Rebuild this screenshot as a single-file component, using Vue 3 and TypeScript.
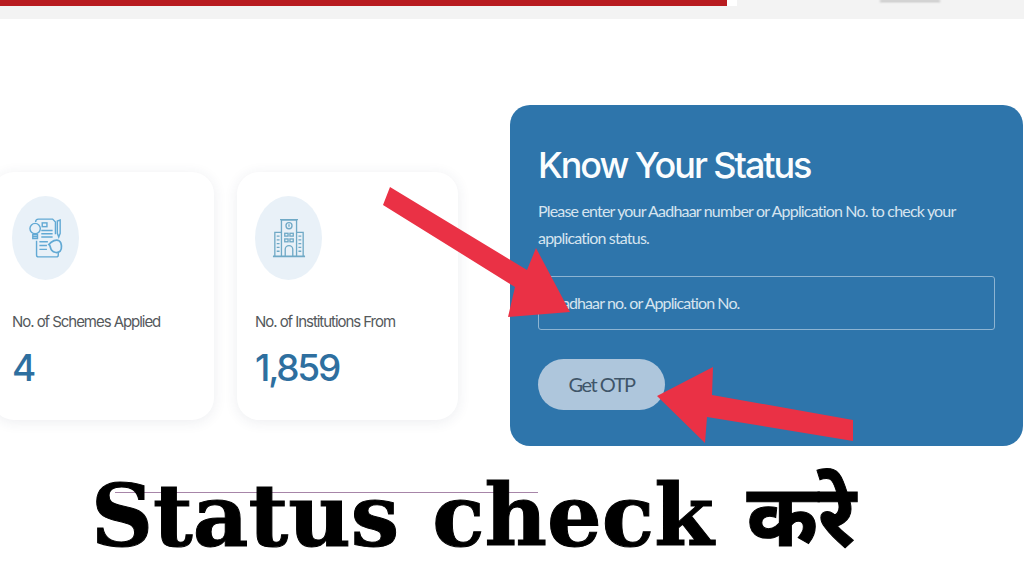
<script setup lang="ts">
interface Stat { label: string; value: string; kind: 'schemes' | 'institutions' }
const stats: Stat[] = [
  { label: 'No. of Schemes Applied', value: '4', kind: 'schemes' },
  { label: 'No. of Institutions From', value: '1,859', kind: 'institutions' },
]
</script>

<template>
  <div class="page">
    <header class="top">
      <div class="red"></div>
      <div class="gap"></div>
      <div class="smudge"></div>
    </header>

    <main class="main">
      <section v-for="s in stats" :key="s.label" class="card">
        <div class="bubble">
          <svg v-if="s.kind === 'schemes'" viewBox="0 0 36 42" class="ico" fill="none" stroke="#62a9d4" stroke-width="1.5">
            <path d="M7 4c0-2 1-3 3-3h15l3 3v13M8 24v15c0 1 1 2 2 2h19c1 0 2-1 2-2v-3" />
            <circle cx="6.500" cy="11" r="5.500" />
            <path d="M4 17.500h5v4H4zM4 19.500h5" />
            <rect x="14" y="5" width="5" height="4" />
            <path d="M13 13h12M13 16.500h12M13 20h12M11 25h9M11 29h8M11 33h8" />
            <path d="M33 2v14l-1.500 4-1.500-4V3z" />
            <path d="M21 28c3-4 8-6 11-4s3 9 1 11-7 2-9-1-1-5-3-6z" stroke-width="1.800" />
          </svg>
          <svg v-else viewBox="0 0 36 42" class="ico" fill="none" stroke="#6fa9c6" stroke-width="1.400">
            <path d="M1 40.500h34" stroke-width="1.800" />
            <path d="M10 40V2h16v38M8.500 1.500h19" />
            <circle cx="18" cy="8" r="3.200" />
            <path d="M18 6.500V9" />
            <path d="M3 40V15h7M33 40V15h-7" />
            <path d="M5 19h3M5 23h3M5 27h3M5 31h3M5 35h3M28 19h3M28 23h3M28 27h3M28 31h3M28 35h3" />
            <rect x="13.500" y="16" width="3.500" height="3" />
            <rect x="19" y="16" width="3.500" height="3" />
            <rect x="13.500" y="22" width="3.500" height="3" />
            <rect x="19" y="22" width="3.500" height="3" />
            <path d="M14 40v-7a4 4 0 0 1 8 0v7" />
          </svg>
        </div>
        <div class="label">{{ s.label }}</div>
        <div class="value">{{ s.value }}</div>
      </section>

      <section class="panel">
        <h1 class="title">Know Your Status</h1>
        <p class="lead">Please enter your Aadhaar number or Application No. to check your application status.</p>
        <div class="field">Aadhaar no. or Application No.</div>
        <button class="otp" type="button">Get OTP</button>
      </section>
    </main>

    <div class="rule"></div>
    <h2 class="caption">Status check करे</h2>

    <svg class="overlay" viewBox="0 0 1024 576">
      <polygon fill="#ea3145" points="390,187 527,270 536,248 570,312 508,317 515,287 383,205" />
      <polygon fill="#ea3145" points="657,396 713,367 712,395 853,420 853,441 707,417 705,443" />
    </svg>
  </div>
</template>

<style>
html, body { margin: 0; background: #fff; overflow: hidden; }
</style>

<style scoped>
.page {
  position: relative;
  width: 1024px;
  height: 576px;
  overflow: hidden;
  background: #fff;
  font-family: "Lato", "Liberation Sans", sans-serif;
}
.top {
  display: flex;
  align-items: flex-start;
  height: 19px;
  background: #f3f3f3;
}
.red { width: 727px; height: 6px; background: #b81c20; }
.gap { width: 10px; height: 6px; background: #fff; }
.smudge {
  width: 60px;
  height: 2px;
  margin: 0 0 0 143px;
  background: #bdbdbd;
  filter: blur(1px);
}
.main {
  display: flex;
  align-items: flex-start;
  margin: 86px 0 0 -8px;
}
.card {
  box-sizing: border-box;
  width: 222px;
  height: 248px;
  margin: 67px 23px 0 0;
  padding: 24px 0 0 20px;
  background: #fff;
  border-radius: 22px;
  box-shadow: 0 2px 14px rgba(40, 60, 90, 0.09);
}
.card + .card { width: 221px; margin-right: 52px; padding-left: 18px; }
.bubble {
  display: flex;
  align-items: center;
  justify-content: center;
  width: 67px;
  height: 84px;
  border-radius: 50%;
  background: #e9f1f8;
}
.ico { width: 34px; height: 40px; }
.label {
  margin-top: 32px;
  font: 15px/20px "Inter", "Liberation Sans", sans-serif;
  letter-spacing: -1.05px;
  color: #55595c;
  white-space: nowrap;
}
.value {
  margin-top: 13px;
  font: 500 37px/46px "Inter", "Liberation Sans", sans-serif;
  letter-spacing: -2.2px;
  color: #2e6f9f;
}
.panel {
  box-sizing: border-box;
  width: 513px;
  height: 341px;
  padding: 37px 28px 0;
  background: #2e75ab;
  border-radius: 20px;
  color: #fff;
}
.title {
  margin: 0;
  font: 500 36px/46px "Inter", "Liberation Sans", sans-serif;
  letter-spacing: -2.05px;
  color: #fbfdfe;
  white-space: nowrap;
}
.lead {
  width: 440px;
  margin: 9px 0 0;
  font-size: 16px;
  line-height: 27px;
  letter-spacing: -0.82px;
  color: #d6e4ef;
}
.field {
  box-sizing: border-box;
  width: 457px;
  height: 54px;
  margin-top: 25px;
  padding: 0 13px;
  border: 1px solid #8db4d2;
  border-radius: 3px;
  font-size: 16px;
  line-height: 52px;
  letter-spacing: -0.9px;
  color: #d6e4ef;
}
.otp {
  display: block;
  width: 127px;
  height: 51px;
  margin-top: 29px;
  padding: 0 0 1px;
  border: 0;
  border-radius: 26px;
  background: #aec6dc;
  font-family: inherit;
  font-size: 20px;
  letter-spacing: -1.5px;
  color: #3f5569;
}
.rule {
  position: absolute;
  left: 115px;
  top: 492px;
  width: 423px;
  height: 1px;
  background: #a785a8;
}
.caption {
  position: absolute;
  left: 91px;
  top: 466px;
  margin: 0;
  font: 700 86px/100px "DejaVu Serif", "Noto Sans", serif;
  letter-spacing: 0;
  word-spacing: 3px;
  color: #000;
  -webkit-text-stroke: 1px #000;
  white-space: nowrap;
}
.overlay {
  position: absolute;
  left: 0;
  top: 0;
  width: 1024px;
  height: 576px;
  pointer-events: none;
}
</style>
